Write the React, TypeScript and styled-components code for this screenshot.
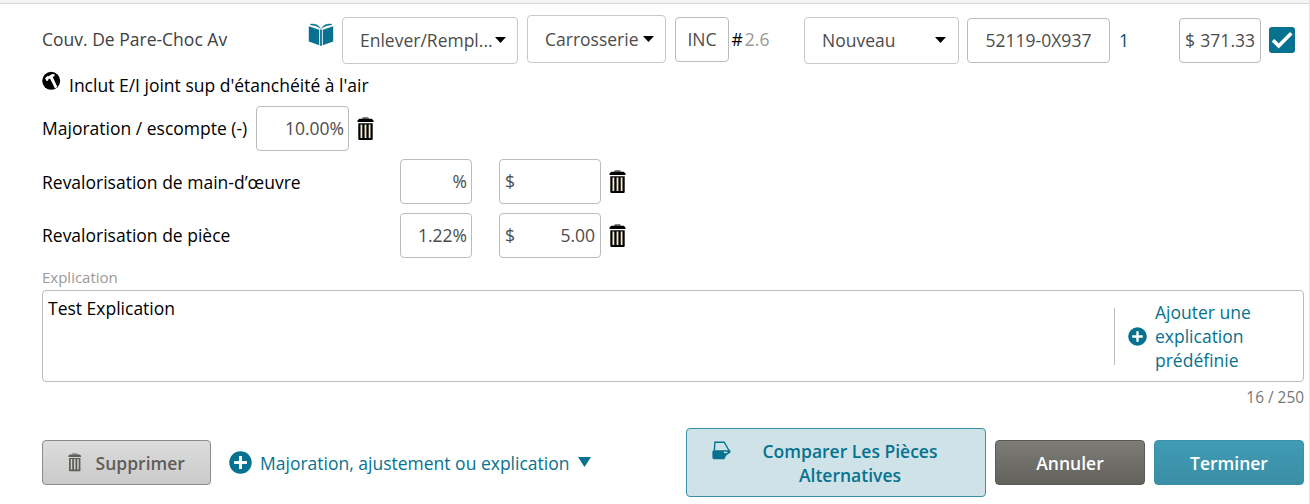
import React from "react";
import styled, { createGlobalStyle, css } from "styled-components";

const teal = "#07728f";

const GlobalStyle = createGlobalStyle`
  * { box-sizing: border-box; }
  body { margin: 0; background: #fff; }
`;

const Panel = styled.main`
  width: 1310px;
  height: 504px;
  overflow: hidden;
  display: flex;
  flex-direction: column;
  border-right: 1px solid #e4e4e4;
  background: #fff;
  color: #000;
  font: 395 17.5px/24px "Open Sans", sans-serif;
`;

const TopStrip = styled.div`
  flex: none;
  height: 4px;
  background: #f4f4f4;
  border-bottom: 1px solid #d6d6d6;
`;

const Content = styled.div`
  padding: 0 5px 0 42px;
  display: flex;
  flex-direction: column;
`;

const LineRow = styled.div`
  height: 62px;
  display: flex;
  align-items: flex-start;
`;

const Cell = styled.div<{ $w: number; $top?: number }>`
  flex: none;
  width: ${(p) => p.$w}px;
  padding-top: ${(p) => p.$top ?? 0}px;
  display: flex;
  white-space: nowrap;
`;

const Description = styled.span`
  color: #404040;
`;

const boxed = css`
  border: 1px solid #bcbcbc;
  border-radius: 4px;
  background: #fff;
  color: #4c4c4c;
  display: flex;
  align-items: center;
  white-space: nowrap;
`;

const SelectBox = styled.div<{ $w: number; $h: number; $right: number }>`
  ${boxed}
  flex: none;
  width: ${(p) => p.$w}px;
  height: ${(p) => p.$h}px;
  border-color: #c8c8c8;
  padding: 0 ${(p) => p.$right}px 1px 17px;
  justify-content: space-between;
`;

const Field = styled.div<{ $w: number; $align?: string }>`
  ${boxed}
  flex: none;
  width: ${(p) => p.$w}px;
  height: 45px;
  padding: 0 ${(p) => (p.$align ? 5 : 4)}px 1px 5px;
  justify-content: ${(p) => p.$align ?? "flex-end"};
`;

const Hours = styled.span`
  color: #999;
`;

const Quantity = styled.span`
  color: #05506e;
`;

const Check = styled.div`
  width: 26px;
  height: 26px;
  border-radius: 3px;
  background: ${teal};
  display: flex;
`;

const NoteRow = styled.div`
  height: 40px;
  padding-top: 5px;
  display: flex;
  gap: 8px;
  line-height: 28px;
`;

const AdjustRow = styled.div<{ $gap: number; $lift?: number }>`
  height: 45px;
  margin-bottom: ${(p) => p.$gap}px;
  display: flex;
  align-items: center;

  > span {
    padding-bottom: ${(p) => p.$lift ?? 0}px;
  }
`;

const AdjustLabel = styled.span<{ $w: number }>`
  flex: none;
  width: ${(p) => p.$w}px;
  white-space: nowrap;
`;

const Spacer = styled.span<{ $w: number }>`
  flex: none;
  width: ${(p) => p.$w}px;
`;

const Caption = styled.label`
  margin-top: 9px;
  height: 23px;
  font-size: 15px;
  line-height: 21px;
  color: #999;
`;

const Explanation = styled.div`
  width: 1262px;
  height: 92px;
  border: 1px solid #bcbcbc;
  border-radius: 4px;
  display: flex;
  justify-content: space-between;
  padding: 5px 0 0 5px;
`;

const Predefined = styled.div`
  margin-top: 12px;
  width: 189px;
  height: 57px;
  border-left: 1px solid #bcbcbc;
  padding-left: 13px;
  display: flex;
  align-items: center;
  gap: 8px;
  color: ${teal};
`;

const PredefinedText = styled.span`
  width: 110px;
  padding-bottom: 2px;
`;

const Counter = styled.div`
  height: 46px;
  padding-top: 5px;
  text-align: right;
  font-size: 15.4px;
  line-height: 22px;
  color: #777;
`;

const Actions = styled.div`
  height: 69px;
  display: flex;
  align-items: center;
`;

const Button = styled.button<{ $tone: "light" | "dark" | "teal" }>`
  flex: none;
  width: ${(p) => (p.$tone === "light" ? 169 : 150)}px;
  height: 45px;
  padding: 0;
  border-radius: 4px;
  display: flex;
  align-items: center;
  justify-content: center;
  gap: 14px;
  font: 600 17.5px/24px "Open Sans", sans-serif;
  ${(p) =>
    p.$tone === "light" &&
    css`
      color: #5f5d59;
      border: 1px solid #8d8b88;
      background: linear-gradient(#dcdcdc, #cacaca);
    `}
  ${(p) =>
    p.$tone === "dark" &&
    css`
      color: #fff;
      border: 1px solid #5a5955;
      background: linear-gradient(#7d7c77, #62615c);
    `}
  ${(p) =>
    p.$tone === "teal" &&
    css`
      color: #fff;
      border: 1px solid #3b90a8;
      background: linear-gradient(#409bb4, #3a8ea5);
    `}
`;

const AddLink = styled.div`
  width: 475px;
  padding-left: 18px;
  display: flex;
  align-items: center;
  gap: 8px;
  color: ${teal};
  white-space: nowrap;
`;

const LinkCaret = styled.svg`
  margin: 0 0 2px 1px;
`;

const CompareButton = styled.button`
  width: 300px;
  height: 69px;
  margin-right: 9px;
  padding: 10px 46px 9px 25px;
  border: 1px solid #3990a8;
  border-radius: 4px;
  background: #cee2e7;
  color: ${teal};
  display: flex;
  justify-content: space-between;
  align-items: flex-start;
  font: 570 17.5px/24px "Open Sans", sans-serif;

  > svg {
    margin-top: 2px;
  }
`;

const CompareText = styled.span`
  width: 178px;
  white-space: nowrap;
  text-align: center;
`;

const Arrow = () => (
  <svg width="11" height="6" viewBox="0 0 11 6">
    <path d="M0 0h11L5.5 6z" fill="#000" />
  </svg>
);

const Trash = ({ size = 24, color = "#000", slot = "#f6ead0" }) => (
  <svg width={(size * 17) / 24} height={size} viewBox="0 0 17 24">
    <path d="M5 1.8Q5 .3 6.5 .3h4Q12 .3 12 1.8z" fill={color} opacity=".7" />
    <path d="M2.3 1.8h12.4L16.5 3.6V5H.5V3.6z" fill={color} />
    <path d="M1.3 6.2h14.4V22a1 1 0 0 1-1 1H2.3a1 1 0 0 1-1-1z" fill={color} />
    <path d="M4.4 7.6v13.4M8.5 7.6v13.4M12.6 7.6v13.4" stroke={slot} strokeWidth="1.8" />
  </svg>
);

const Plus = ({ size }: { size: number }) => (
  <svg width={size} height={size} viewBox="0 0 24 24" style={{ flex: "none" }}>
    <circle cx="12" cy="12" r="11.7" fill={teal} />
    <path d="M12 5.3v13.4M5.3 12h13.4" stroke="#fff" strokeWidth="3" />
  </svg>
);

const Book = () => (
  <svg width="26" height="24" viewBox="0 0 26 24">
    <path d="M.8 3.2 11.2 6.8V22.2L.8 18.6zM25.2 3.2 14.8 6.8v15.4l10.4-3.6z" fill={teal} />
    <path d="M12.1 6.6h1.8v16.2h-1.8z" fill={teal} />
    <path d="M2.6 1.1Q9.6.3 12.4 5.4 8.2 2 2.6 1.9zM23.4 1.1Q16.4.3 13.6 5.4 17.8 2 23.4 1.9z" fill={teal} stroke={teal} strokeWidth=".4" />
  </svg>
);

const Hammer = () => (
  <svg width="19" height="19" viewBox="0 0 19 19">
    <circle cx="9.2" cy="9.8" r="9" fill="#000" />
    <path d="M3 7.2 5.4 4.9 6.5 5.3 10.2 2.9l2.6.5-.3 1.5-1.8 1.2 4.7 9.8-2.4 1.6L8 7.4 6.4 8.3 6 9.7 4.6 10z" fill="#fff" />
  </svg>
);

const Door = () => (
  <svg width="19" height="19" viewBox="0 0 19 19">
    <path d="M2.4 9.5 2.9 1.2h9.3L17.3 10" fill="none" stroke={teal} strokeWidth="1.4" />
    <path d="M1.4 9.2h17v2.4L14.2 14.6 12.4 18.2H2Q.4 18.2.4 16.8V10.2z" fill={teal} />
    <path d="M11.8 11.4h3.6" stroke="#cee2e7" strokeWidth="1.4" />
  </svg>
);

export default function App() {
  return (
    <Panel>
      <GlobalStyle />
      <TopStrip />
      <Content>
        <LineRow>
          <Cell $w={266} $top={23}><Description>Couv. De Pare-Choc Av</Description></Cell>
          <Cell $w={34} $top={19}><Book /></Cell>
          <Cell $w={185} $top={13}>
            <SelectBox $w={176} $h={47} $right={11}>Enlever/Rempl...<Arrow /></SelectBox>
          </Cell>
          <Cell $w={148} $top={11}>
            <SelectBox $w={139} $h={48} $right={11}>Carrosserie<Arrow /></SelectBox>
          </Cell>
          <Cell $w={56.5} $top={13}><Field $w={54} $align="center">INC</Field></Cell>
          <Cell $w={72.5} $top={23}>#<Spacer $w={2} /><Hours>2.6</Hours></Cell>
          <Cell $w={163} $top={13}>
            <SelectBox $w={155} $h={47} $right={12}>Nouveau<Arrow /></SelectBox>
          </Cell>
          <Cell $w={152} $top={14}><Field $w={143} $align="center">52119-0X937</Field></Cell>
          <Cell $w={60} $top={24}><Quantity>1</Quantity></Cell>
          <Cell $w={90} $top={14}><Field $w={82} $align="space-between"><span>$</span><span>371.33</span></Field></Cell>
          <Cell $w={26} $top={23}>
            <Check>
              <svg width="26" height="26" viewBox="0 0 26 26">
                <path d="M4 13.3l5.7 5.6L22.3 6.3" fill="none" stroke="#fff" strokeWidth="3.6" />
              </svg>
            </Check>
          </Cell>
        </LineRow>
        <NoteRow><Hammer />Inclut E/I joint sup d'étanchéité à l'air</NoteRow>
        <AdjustRow $gap={8} $lift={1}>
          <AdjustLabel $w={214}>Majoration / escompte (-)</AdjustLabel>
          <Field $w={93}>10.00%</Field>
          <Spacer $w={8} />
          <Trash />
        </AdjustRow>
        <AdjustRow $gap={9}>
          <AdjustLabel $w={358}>Revalorisation de main-d’œuvre</AdjustLabel>
          <Field $w={72}>%</Field>
          <Spacer $w={27} />
          <Field $w={102} $align="space-between"><span>$</span></Field>
          <Spacer $w={8} />
          <Trash />
        </AdjustRow>
        <AdjustRow $gap={0} $lift={1}>
          <AdjustLabel $w={358}>Revalorisation de pièce</AdjustLabel>
          <Field $w={72}>1.22%</Field>
          <Spacer $w={27} />
          <Field $w={102} $align="space-between"><span>$</span><span>5.00</span></Field>
          <Spacer $w={8} />
          <Trash />
        </AdjustRow>
        <Caption>Explication</Caption>
        <Explanation>
          <span>Test Explication</span>
          <Predefined>
            <Plus size={19} />
            <PredefinedText>Ajouter une explication prédéfinie</PredefinedText>
          </Predefined>
        </Explanation>
        <Counter>16 / 250</Counter>
        <Actions>
          <Button $tone="light"><Trash size={19} color="#5f5d59" slot="#d3d3d3" />Supprimer</Button>
          <AddLink>
            <Plus size={23} />
            Majoration, ajustement ou explication
            <LinkCaret width="13" height="10" viewBox="0 0 13 10"><path d="M0 0h13L6.5 10z" fill={teal} /></LinkCaret>
          </AddLink>
          <CompareButton><Door /><CompareText>Comparer Les Pièces<br />Alternatives</CompareText></CompareButton>
          <Button $tone="dark">Annuler</Button>
          <Spacer $w={9} />
          <Button $tone="teal">Terminer</Button>
        </Actions>
      </Content>
    </Panel>
  );
}
